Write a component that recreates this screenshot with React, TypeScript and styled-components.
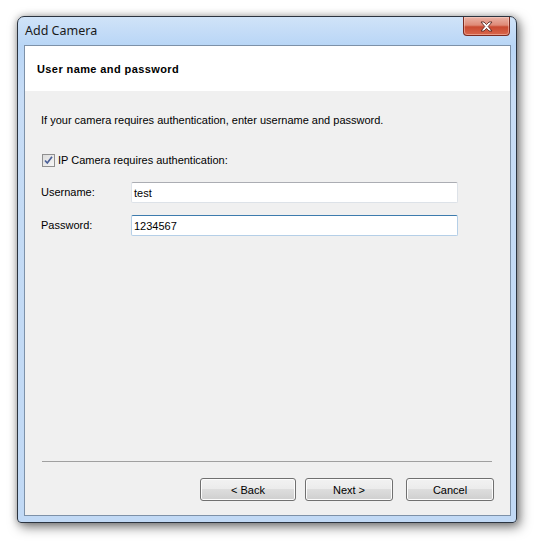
import React from "react";
import styled, { createGlobalStyle } from "styled-components";

const Global = createGlobalStyle`
  html, body { margin: 0; padding: 0; background: #ffffff; }
  body { font-family: "Liberation Sans", Arial, sans-serif; font-size: 11px; color: #000; }
`;

const Page = styled.div`
  width: 536px;
  height: 543px;
  padding: 16px 0 0 17px;
  box-sizing: border-box;
`;

const Window = styled.div`
  width: 500px;
  height: 507px;
  box-sizing: border-box;
  border: 1px solid #2b3440;
  border-radius: 7px 7px 4px 4px;
  background: linear-gradient(
    to bottom,
    #d0e3f8 0px,
    #b9d6f6 28px,
    #c8ddf6 80px,
    #c4dbf5 200px,
    #c1d9f5 100%
  );
  box-shadow: 3px 4px 12px rgba(0, 0, 0, 0.5), 0 0 7px rgba(0, 0, 0, 0.25);
  display: flex;
  flex-direction: column;
  overflow: hidden;
`;

const TitleBar = styled.div`
  height: 28px;
  display: flex;
  align-items: flex-start;
  justify-content: space-between;
  padding: 0 6px 0 7px;
  flex-shrink: 0;
`;

const Title = styled.div`
  font-family: "Noto Sans", "Open Sans", sans-serif;
  font-size: 12.5px;
  color: #1a1a1a;
  margin-top: 5px;
`;

const CloseButton = styled.div`
  width: 47px;
  height: 19px;
  box-sizing: border-box;
  border: 1px solid #7a2a20;
  border-top: none;
  border-radius: 0 0 4px 4px;
  background: linear-gradient(
    to bottom,
    #eab3a6 0%,
    #df8a77 45%,
    #c94a31 55%,
    #d9664b 100%
  );
  box-shadow: inset 0 0 0 1px rgba(255, 220, 210, 0.45);
  display: flex;
  align-items: center;
  justify-content: center;
`;

const Client = styled.div`
  flex: 1;
  margin: 0 5px 6px 6px;
  border: 1px solid #7d91a8;
  background: #f0f0f0;
  display: flex;
  flex-direction: column;
`;

const Header = styled.div`
  height: 45px;
  background: #ffffff;
  display: flex;
  align-items: center;
  padding-left: 12px;
  font-weight: bold;
  font-size: 11px;
  letter-spacing: 0.4px;
  flex-shrink: 0;
`;

const Body = styled.div`
  flex: 1;
  display: flex;
  flex-direction: column;
  padding: 23px 17px 0 16px;
`;

const Intro = styled.div`
  line-height: 13px;
  margin-bottom: 27px;
`;

const CheckRow = styled.label`
  display: flex;
  align-items: center;
  gap: 3px;
  line-height: 13px;
  margin-left: 1px;
  margin-bottom: 15px;
`;

const Box = styled.span`
  width: 13px;
  height: 13px;
  box-sizing: border-box;
  border: 1px solid #8f8f8f;
  background: linear-gradient(135deg, #dcdcdc, #f6f6f6);
  display: inline-flex;
  align-items: center;
  justify-content: center;
`;

const FieldRow = styled.div`
  display: flex;
  align-items: center;
  margin-bottom: 12px;
`;

const FieldLabel = styled.span`
  width: 90px;
  flex-shrink: 0;
  margin-top: -2px;
`;

const TextBox = styled.div<{ $focused?: boolean }>`
  width: 327px;
  height: 21px;
  box-sizing: border-box;
  background: #fff;
  border: 1px solid ${(p) => (p.$focused ? "#b5cfe7" : "#dde2e8")};
  border-top-color: ${(p) => (p.$focused ? "#3d7bad" : "#abadb3")};
  border-radius: 2px;
  padding: 0 2px;
  display: flex;
  align-items: center;
`;

const Spacer = styled.div`
  flex: 1;
`;

const Separator = styled.div`
  height: 1px;
  background: #a0a0a0;
  margin: 0 1px 0 1px;
`;

const ButtonRow = styled.div`
  display: flex;
  justify-content: flex-end;
  padding: 16px 0 14px 0;
  margin-right: -1px;
`;

const Button = styled.div<{ $w: number; $gap: number }>`
  width: ${(p) => p.$w}px;
  height: 23px;
  margin-left: ${(p) => p.$gap}px;
  box-sizing: border-box;
  border: 1px solid #707070;
  border-radius: 3px;
  background: linear-gradient(
    to bottom,
    #f2f2f2 0%,
    #ebebeb 49%,
    #dddddd 50%,
    #cfcfcf 100%
  );
  box-shadow: inset 0 0 0 1px #fcfcfc;
  display: flex;
  align-items: center;
  justify-content: center;
`;

export default function App() {
  return (
    <Page>
      <Global />
      <Window>
        <TitleBar>
          <Title>Add Camera</Title>
          <CloseButton>
            <svg width="13" height="11" viewBox="0 0 13 11">
              <path
                d="M1 1 L4 1 L6.5 3.6 L9 1 L12 1 L8.2 5.5 L12 10 L9 10 L6.5 7.4 L4 10 L1 10 L4.8 5.5 Z"
                fill="#ffffff"
                stroke="#5a2a24"
                strokeWidth="0.9"
                strokeLinejoin="round"
              />
            </svg>
          </CloseButton>
        </TitleBar>
        <Client>
          <Header>User name and password</Header>
          <Body>
            <Intro>If your camera requires authentication, enter username and password.</Intro>
            <CheckRow>
              <Box>
                <svg width="11" height="11" viewBox="0 0 11 11">
                  <path d="M2 5.5 L4.3 8 L9 1.8" fill="none" stroke="#4a5f97" strokeWidth="1.7" />
                </svg>
              </Box>
              IP Camera requires authentication:
            </CheckRow>
            <FieldRow>
              <FieldLabel>Username:</FieldLabel>
              <TextBox>test</TextBox>
            </FieldRow>
            <FieldRow>
              <FieldLabel>Password:</FieldLabel>
              <TextBox $focused>1234567</TextBox>
            </FieldRow>
            <Spacer />
            <Separator />
            <ButtonRow>
              <Button $w={96} $gap={0}>&lt; Back</Button>
              <Button $w={88} $gap={9}>Next &gt;</Button>
              <Button $w={88} $gap={13}>Cancel</Button>
            </ButtonRow>
          </Body>
        </Client>
      </Window>
    </Page>
  );
}
